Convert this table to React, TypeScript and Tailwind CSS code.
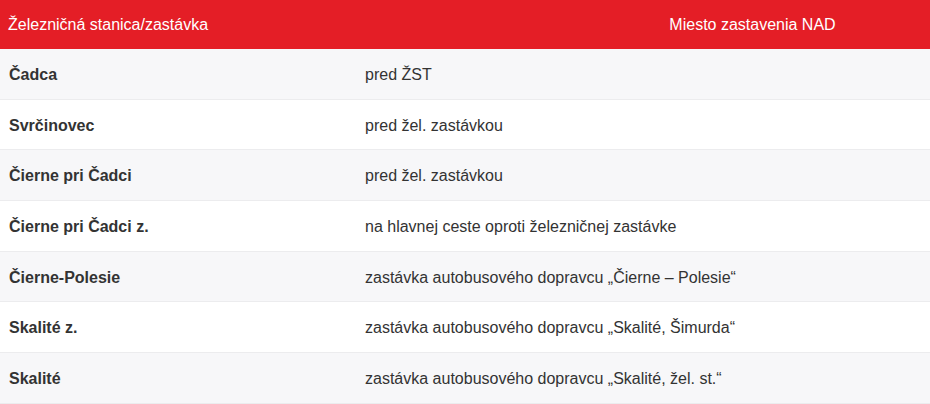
import React from "react";

const rows: [string, string][] = [
  ["Čadca", "pred ŽST"],
  ["Svrčinovec", "pred žel. zastávkou"],
  ["Čierne pri Čadci", "pred žel. zastávkou"],
  ["Čierne pri Čadci z.", "na hlavnej ceste oproti železničnej zastávke"],
  ["Čierne-Polesie", "zastávka autobusového dopravcu „Čierne – Polesie“"],
  ["Skalité z.", "zastávka autobusového dopravcu „Skalité, Šimurda“"],
  ["Skalité", "zastávka autobusového dopravcu „Skalité, žel. st.“"],
];

export default function App() {
  return (
    <div
      className="w-[930px] h-[404px] overflow-hidden bg-white text-[16px] text-[#333333]"
      style={{ fontFamily: '"Liberation Sans", Arial, sans-serif' }}
    >
      <div className="flex h-[49px] items-center bg-[#e41e26] text-white">
        <div className="w-[575px] pl-[8px]">Železničná stanica/zastávka</div>
        <div className="flex-1 text-center">Miesto zastavenia NAD</div>
      </div>
      {rows.map(([a, b], i) => (
        <div
          key={i}
          className={
            "flex h-[50.7px] items-center border-b border-[#ececee] pt-[2px] " +
            (i % 2 === 0 ? "bg-[#f7f7f9]" : "bg-white")
          }
        >
          <div className="w-[357px] pl-[9px] font-bold">{a}</div>
          <div className="flex-1 pl-[8px]">{b}</div>
        </div>
      ))}
    </div>
  );
}
